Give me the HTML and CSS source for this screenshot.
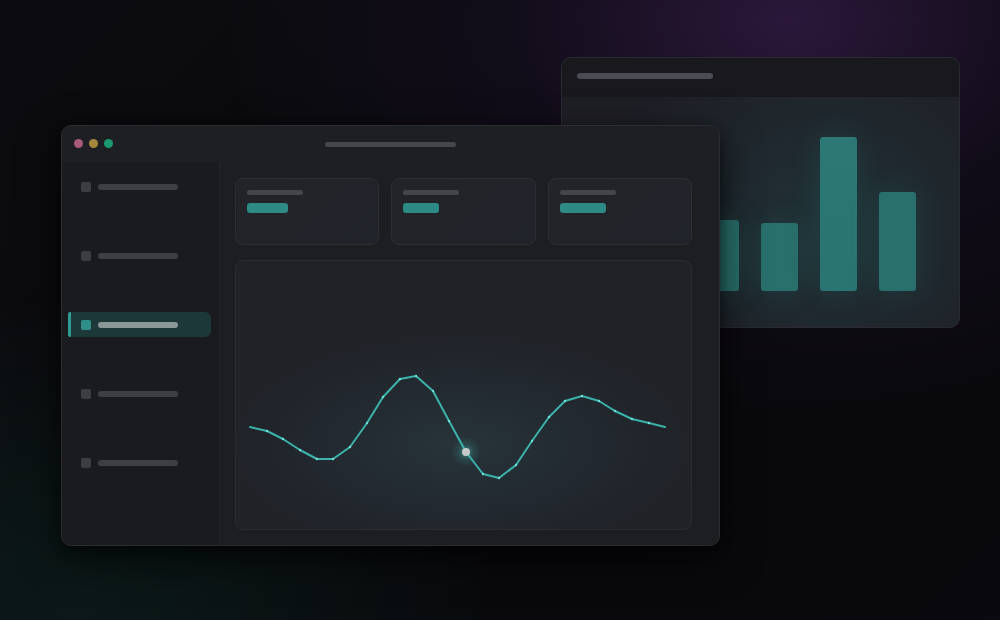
FILE: index.html
```html
<!DOCTYPE html>
<html>
<head>
<meta charset="utf-8">
<link rel="stylesheet" href="styles.css">
</head>
<body>
<div class="desktop">
  <div class="win back">
    <div class="back-head"><span class="line head-line"></span></div>
    <div class="back-body">
      <div class="bar" style="height:60px"></div>
      <div class="bar" style="height:90px"></div>
      <div class="bar" style="height:71px"></div>
      <div class="bar" style="height:68px"></div>
      <div class="bar bar-tall" style="height:154px"></div>
      <div class="bar" style="height:99px"></div>
    </div>
  </div>

  <div class="win front">
    <div class="titlebar">
      <div class="dots"><span class="dot pink"></span><span class="dot gold"></span><span class="dot green"></span></div>
      <span class="line title-line"></span>
    </div>
    <div class="content">
      <aside class="sidebar">
        <div class="item"><span class="sq"></span><span class="line item-line"></span></div>
        <div class="item"><span class="sq"></span><span class="line item-line"></span></div>
        <div class="item active"><span class="sq"></span><span class="line item-line"></span></div>
        <div class="item"><span class="sq"></span><span class="line item-line"></span></div>
        <div class="item"><span class="sq"></span><span class="line item-line"></span></div>
      </aside>
      <main class="main">
        <div class="cards">
          <div class="card"><span class="line card-label"></span><span class="pill" style="width:41px"></span></div>
          <div class="card"><span class="line card-label"></span><span class="pill" style="width:36px"></span></div>
          <div class="card"><span class="line card-label"></span><span class="pill" style="width:46px"></span></div>
        </div>
        <div class="chart">
          <svg class="chart-svg" viewBox="0 0 457 270" width="457" height="270">
            <defs>
              <radialGradient id="halo" cx="0.5" cy="0.5" r="0.5">
                <stop offset="0" stop-color="#5fd6cc" stop-opacity="0.55"/>
                <stop offset="0.5" stop-color="#3aa9a0" stop-opacity="0.18"/>
                <stop offset="1" stop-color="#3aa9a0" stop-opacity="0"/>
              </radialGradient>
              <radialGradient id="centerglow" cx="0.5" cy="0.5" r="0.5">
                <stop offset="0" stop-color="#28363c" stop-opacity="0.9"/>
                <stop offset="0.6" stop-color="#25313a" stop-opacity="0.4"/>
                <stop offset="1" stop-color="#232b33" stop-opacity="0"/>
              </radialGradient>
            </defs>
            <ellipse cx="225" cy="185" rx="250" ry="120" fill="url(#centerglow)"/>
            <polyline fill="none" stroke="#3bb3a9" stroke-width="2" stroke-linejoin="round" stroke-linecap="round"
              points="15,167 32,171 48,179 65,190 82,199 98,199 115,187 132,163 148,137 165,119 181,116 198,131 214,161 231,192 248,214 264,218 281,205 297,181 314,157 330,141 347,136 364,141 380,151 397,159 414,163 430,167"/>
            <g fill="#6fe0d6">
              <circle cx="32" cy="171" r="1.2"/><circle cx="48" cy="179" r="1.2"/><circle cx="65" cy="190" r="1.2"/>
              <circle cx="82" cy="199" r="1.2"/><circle cx="98" cy="199" r="1.2"/><circle cx="115" cy="187" r="1.2"/>
              <circle cx="132" cy="163" r="1.2"/><circle cx="148" cy="137" r="1.2"/><circle cx="165" cy="119" r="1.2"/>
              <circle cx="181" cy="116" r="1.2"/><circle cx="198" cy="131" r="1.2"/><circle cx="214" cy="161" r="1.2"/>
              <circle cx="248" cy="214" r="1.2"/><circle cx="264" cy="218" r="1.2"/><circle cx="281" cy="205" r="1.2"/>
              <circle cx="297" cy="181" r="1.2"/><circle cx="314" cy="157" r="1.2"/><circle cx="330" cy="141" r="1.2"/>
              <circle cx="347" cy="136" r="1.2"/><circle cx="364" cy="141" r="1.2"/><circle cx="380" cy="151" r="1.2"/>
              <circle cx="397" cy="159" r="1.2"/><circle cx="414" cy="163" r="1.2"/>
            </g>
            <circle cx="231" cy="192" r="15" fill="url(#halo)"/>
            <circle cx="231" cy="192" r="4" fill="#c4cac9"/>
          </svg>
        </div>
      </main>
    </div>
  </div>
</div>
</body>
</html>
```

FILE: styles.css
```css
* { box-sizing: border-box; }
html, body { margin: 0; padding: 0; }
body {
  width: 1000px;
  height: 620px;
  overflow: hidden;
  background: #0a0a0d;
  font-family: "Inter", "Liberation Sans", sans-serif;
}
.desktop {
  position: relative;
  width: 1000px;
  height: 620px;
  overflow: hidden;
  background:
    radial-gradient(ellipse 560px 400px at 790px 20px, rgba(70, 35, 95, 0.55), rgba(40, 20, 60, 0.25) 50%, rgba(0,0,0,0) 100%),
    radial-gradient(ellipse 420px 300px at 80px 600px, rgba(15, 60, 50, 0.3), rgba(0,0,0,0) 100%),
    linear-gradient(135deg, #0c0c10 0%, #09090c 60%, #0a090d 100%);
}

.line {
  display: block;
  border-radius: 3px;
}

/* back window */
.win { position: absolute; }
.back {
  left: 561px;
  top: 57px;
  width: 399px;
  height: 271px;
  border-radius: 10px;
  background: #1e1e25;
  border: 1px solid #2a2a33;
  overflow: hidden;
  display: flex;
  flex-direction: column;
}
.back-head {
  height: 39px;
  background: #18181d;
  padding: 15px 0 0 15px;
  flex: none;
}
.head-line {
  width: 136px;
  height: 6px;
  background: #4c4c54;
}
.back-body {
  flex: 1;
  display: flex;
  align-items: flex-end;
  gap: 22px;
  padding: 0 43px 36px 22px;
  background: radial-gradient(ellipse 240px 210px at 265px 130px, rgba(40, 100, 100, 0.28), rgba(0,0,0,0) 100%);
}
.bar {
  width: 37px;
  border-radius: 3px;
  background: #296f6b;
  box-shadow: 0 0 30px rgba(42, 140, 132, 0.2);
}
.bar-tall {
  background: linear-gradient(180deg, #2b7875, #2a7471);
}

/* front window */
.front {
  left: 61px;
  top: 125px;
  width: 659px;
  height: 421px;
  border-radius: 10px;
  background: #1d1e22;
  border: 1px solid #2c2d32;
  overflow: hidden;
  display: flex;
  flex-direction: column;
  box-shadow: 0 14px 40px rgba(0,0,0,0.6), 0 4px 12px rgba(0,0,0,0.4);
}
.titlebar {
  height: 36px;
  flex: none;
  background: #1e1f23;
  position: relative;
  display: flex;
  align-items: center;
  justify-content: center;
}
.dots {
  position: absolute;
  left: 12px;
  top: 13px;
  display: flex;
  gap: 6px;
}
.dot {
  width: 9px;
  height: 9px;
  border-radius: 50%;
}
.pink { background: #a95a7a; }
.gold { background: #a5873c; }
.green { background: #199a70; }
.title-line {
  width: 131px;
  height: 5px;
  background: #46474d;
}
.content {
  flex: 1;
  display: flex;
  min-height: 0;
}
.sidebar {
  width: 158px;
  flex: none;
  background: #1a1b1f;
  border-right: 1px solid #25262b;
  padding: 12px 8px 0 6px;
  display: flex;
  flex-direction: column;
  gap: 44px;
}
.item {
  height: 25px;
  display: flex;
  align-items: center;
  padding-left: 13px;
  border-radius: 6px;
  position: relative;
}
.sq {
  width: 10px;
  height: 10px;
  border-radius: 2px;
  background: #3b3d42;
  margin-right: 7px;
}
.item-line {
  width: 80px;
  height: 6px;
  background: #3d3f45;
}
.item.active {
  background: #1d3839;
}
.item.active::before {
  content: "";
  position: absolute;
  left: 0;
  top: 0;
  bottom: 0;
  width: 3px;
  background: #2f9b92;
  border-radius: 2px 0 0 2px;
}
.item.active .sq { background: #2f8f88; }
.item.active .item-line { background: #8a9898; }

.main {
  flex: 1;
  background: #1d1e22;
  padding: 16px 27px 15px 15px;
  display: flex;
  flex-direction: column;
  gap: 15px;
}
.cards {
  display: grid;
  grid-template-columns: 144px 145px 144px;
  gap: 12px;
  flex: none;
}
.card {
  height: 67px;
  border-radius: 8px;
  background: linear-gradient(135deg, #222429, #202329);
  border: 1px solid #2c2e33;
  padding: 11px 11px 0 11px;
  display: flex;
  flex-direction: column;
  gap: 8px;
}
.card-label {
  width: 56px;
  height: 5px;
  background: #44464c;
}
.pill {
  display: block;
  height: 10px;
  border-radius: 3px;
  background: #2d8a84;
}
.chart {
  flex: 1;
  border-radius: 8px;
  background: #202227;
  border: 1px solid #2a2c31;
  overflow: hidden;
  position: relative;
}
.chart-svg {
  display: block;
  position: absolute;
  left: -1px;
  top: -1px;
}
```
